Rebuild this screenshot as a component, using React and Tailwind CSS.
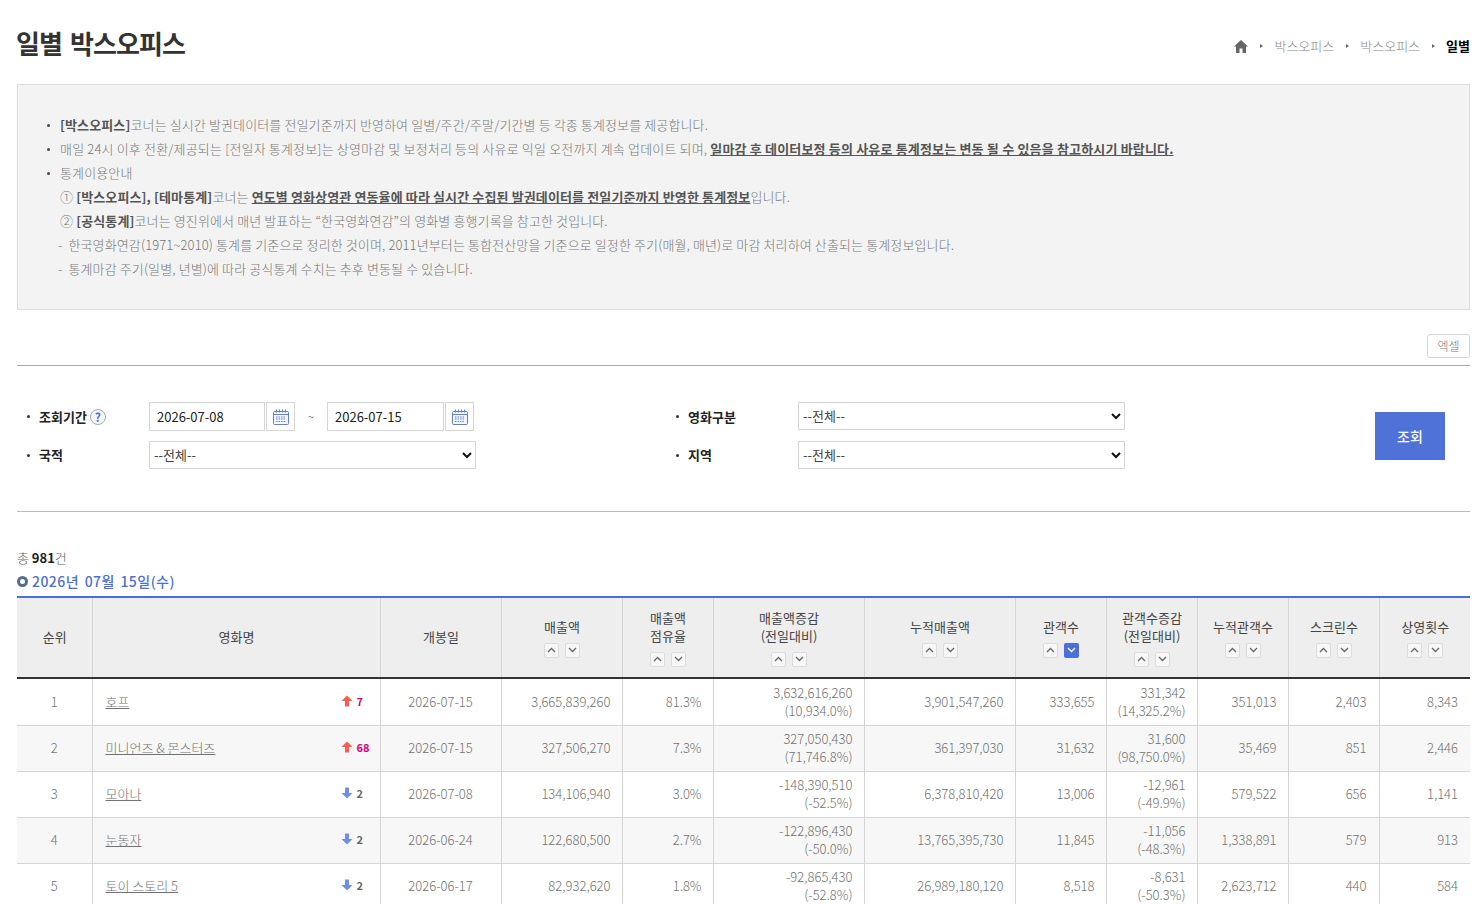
const font = { fontFamily: '"Noto Sans CJK KR", "Noto Sans", sans-serif' };

function Cal() {
  return (
    <svg width="18" height="18" viewBox="0 0 18 18" fill="none" stroke="#5b7fdc" strokeWidth="1">
      <rect x="1.5" y="3.5" width="15" height="13" rx="1" fill="#f4f7fe" />
      <path d="M1.5 6.5h15" />
      <path d="M4.5 1.5v3M7.5 1.5v3M10.5 1.5v3M13.5 1.5v3" />
      <path d="M4 9h1.500M6.500 9h1.500M9 9h1.500M11.500 9h1.500M4 11h1.500M6.500 11h1.500M9 11h1.500M11.500 11h1.500M4 13.500h1.500M6.500 13.500h1.500M9 13.500h1.500M11.500 13.500h1.500" strokeWidth="1.200" />
    </svg>
  );
}

function Sort({ active }) {
  const cls = "w-[15px] h-[15px] flex items-center justify-center rounded-[2px] border border-[#dcdcdc] bg-[#f7f7f7]";
  return (
    <div className="flex justify-center gap-[6px] mt-[7px]">
      <span className={cls}>
        <svg width="9" height="6" viewBox="0 0 9 6" fill="none" stroke="#666" strokeWidth="1.300"><path d="M1 5l3.500-3.500L8 5" /></svg>
      </span>
      <span className={active ? "w-[15px] h-[15px] flex items-center justify-center rounded-[2px] bg-[#4a6fd8]" : cls}>
        <svg width="9" height="6" viewBox="0 0 9 6" fill="none" stroke={active ? "#fff" : "#666"} strokeWidth="1.300"><path d="M1 1l3.500 3.500L8 1" /></svg>
      </span>
    </div>
  );
}

function Arrow({ up }) {
  return (
    <svg width="12" height="12" viewBox="0 0 12 12" fill={up ? "#ff5a4f" : "#6f8fe6"} className="inline-block">
      {up ? <path d="M6 .5L11.500 6H8v5.500H4V6H.5z" /> : <path d="M6 11.500L.5 6H4V.5h4V6h3.500z" />}
    </svg>
  );
}

const cols = [75, 288, 121, 121, 91, 151, 151, 91, 91, 91, 91, 91];

const heads = [
  ["순위"],
  ["영화명"],
  ["개봉일"],
  ["매출액", 1],
  ["매출액", "점유율", 1],
  ["매출액증감", "(전일대비)", 1],
  ["누적매출액", 1],
  ["관객수", 2],
  ["관객수증감", "(전일대비)", 1],
  ["누적관객수", 1],
  ["스크린수", 1],
  ["상영횟수", 1],
];

const rows = [
  ["1", "호프", "up", "7", "2026-07-15", "3,665,839,260", "81.3%", "3,632,616,260", "(10,934.0%)", "3,901,547,260", "333,655", "331,342", "(14,325.2%)", "351,013", "2,403", "8,343"],
  ["2", "미니언즈 & 몬스터즈", "up", "68", "2026-07-15", "327,506,270", "7.3%", "327,050,430", "(71,746.8%)", "361,397,030", "31,632", "31,600", "(98,750.0%)", "35,469", "851", "2,446"],
  ["3", "모아나", "down", "2", "2026-07-08", "134,106,940", "3.0%", "-148,390,510", "(-52.5%)", "6,378,810,420", "13,006", "-12,961", "(-49.9%)", "579,522", "656", "1,141"],
  ["4", "눈동자", "down", "2", "2026-06-24", "122,680,500", "2.7%", "-122,896,430", "(-50.0%)", "13,765,395,730", "11,845", "-11,056", "(-48.3%)", "1,338,891", "579", "913"],
  ["5", "토이 스토리 5", "down", "2", "2026-06-17", "82,932,620", "1.8%", "-92,865,430", "(-52.8%)", "26,989,180,120", "8,518", "-8,631", "(-50.3%)", "2,623,712", "440", "584"],
];

const Num = ({ children, last, wide }) => (
  <td className={`text-right ${wide ? "pr-[12px]" : "pr-[11px]"} ${last ? "" : "border-r border-[#d5d5d5]"}`}>{children}</td>
);

const Two = ({ a, b }) => (
  <td className="text-right pr-[11px] border-r border-[#d5d5d5] leading-[18px]">
    <div>{a}</div>
    <div>{b}</div>
  </td>
);

function Select({ w }) {
  return (
    <div className={`${w} h-[28px] border border-[#d5d5d5] bg-white flex items-center justify-between pl-[4px] pr-[3px] text-[13px] font-normal text-[#444]`}>
      <span>--전체--</span>
      <svg width="10" height="7" viewBox="0 0 10 7" fill="none" stroke="#111" strokeWidth="2"><path d="M1 1l4 4 4-4" /></svg>
    </div>
  );
}

const Label = ({ children }) => (
  <span className="flex items-center font-bold text-[13px] text-[#222]">
    <span className="w-[3px] h-[3px] rounded-full bg-[#333] ml-[10px] mr-[9px]" />
    {children}
  </span>
);

function DateBox({ v, w }) {
  return (
    <div className="flex gap-[1px]">
      <div className={`${w} h-[29px] border border-[#d5d5d5] flex items-center pl-[7px] text-[13px] font-normal text-[#222]`}>{v}</div>
      <div className="w-[29px] h-[29px] border border-[#d5d5d5] flex items-center justify-center"><Cal /></div>
    </div>
  );
}

const Li = ({ children }) => (
  <li className="flex items-center h-[24px]">
    <span className="w-[3px] h-[3px] rounded-full bg-[#444] ml-[1px] mr-[10px]" />
    <span>{children}</span>
  </li>
);

const Sep = () => <span className="ml-[12px] mr-[11px] w-0 h-0 border-y-[2.500px] border-y-transparent border-l-[3px] border-l-[#666]" />;

export default function App() {
  return (
    <div style={font} className="h-[904px] w-[1478px] overflow-hidden bg-white pl-[17px] pr-[8px] text-[#777] font-light">
      <div className="flex items-center justify-between h-[84px]">
        <h1 className="text-[26px] font-bold text-[#333] tracking-[-0.9px] [word-spacing:3px] leading-none -ml-[1px] mt-[2px]">일별 박스오피스</h1>
        <div className="flex items-center text-[13px] mt-[8px]">
          <svg width="14" height="13" viewBox="0 0 14 13" fill="#666"><path d="M7 0L0 6.500h2V13h3.500V8.500h3V13H12V6.500h2z" /></svg>
          <Sep />
          <span className="text-[#888]">박스오피스</span>
          <Sep />
          <span className="text-[#888]">박스오피스</span>
          <Sep />
          <b className="text-black font-bold">일별</b>
        </div>
      </div>

      <div className="h-[226px] border border-[#ddd] bg-[#f3f3f3] pt-[28px] pl-[28px] text-[13px] text-[#777] tracking-[0.12px]">
        <ul>
          <Li><b className="text-[#555] font-bold">[박스오피스]</b>코너는 실시간 발권데이터를 전일기준까지 반영하여 일별/주간/주말/기간별 등 각종 통계정보를 제공합니다.</Li>
          <Li><span className="tracking-[0.17px]">매일 24시 이후 전환/제공되는 [전일자 통계정보]는 상영마감 및 보정처리 등의 사유로 익일 오전까지 계속 업데이트 되며, <b className="text-[#555] font-bold underline">일마감 후 데이터보정 등의 사유로 통계정보는 변동 될 수 있음을 참고하시기 바랍니다.</b></span></Li>
          <Li>통계이용안내</Li>
        </ul>
        <div className="pl-[14px] leading-[24px]">
          <div>① <b className="text-[#555] font-bold">[박스오피스], [테마통계]</b>코너는 <b className="text-[#555] font-bold underline">연도별 영화상영관 연동율에 따라 실시간 수집된 발권데이터를 전일기준까지 반영한 통계정보</b>입니다.</div>
          <div>② <b className="text-[#555] font-bold">[공식통계]</b>코너는 영진위에서 매년 발표하는 “한국영화연감”의 영화별 흥행기록을 참고한 것입니다.</div>
          <div className="-ml-[2px]">-&nbsp; 한국영화연감(1971~2010) 통계를 기준으로 정리한 것이며, 2011년부터는 통합전산망을 기준으로 일정한 주기(매월, 매년)로 마감 처리하여 산출되는 통계정보입니다.</div>
          <div className="-ml-[2px]">-&nbsp; 통계마감 주기(일별, 년별)에 따라 공식통계 수치는 추후 변동될 수 있습니다.</div>
        </div>
      </div>

      <div className="flex justify-end pt-[24px] pb-[7px] border-b border-[#aaa]">
        <span className="w-[43px] h-[24px] border border-[#d5d5d5] rounded-[3px] flex items-center justify-center text-[12px] text-[#777]">엑셀</span>
      </div>

      <div className="h-[146px] border-b border-[#bbb] flex">
        <div className="grid grid-cols-[132px_1fr] grid-rows-[29px_28px] gap-y-[10px] items-start content-start pt-[36px] w-[649px]">
          <div className="h-[29px] flex items-center">
            <Label>조회기간
              <span className="ml-[3px] mt-[1px] w-[16px] h-[16px] rounded-full border border-[#aaa] bg-[#f5f7fd] text-[#4a6fd8] text-[12px] font-bold flex items-center justify-center">?</span>
            </Label>
          </div>
          <div className="flex items-center">
            <DateBox v="2026-07-08" w="w-[116px]" />
            <span className="w-[32px] text-center text-[11px] text-[#555]">~</span>
            <DateBox v="2026-07-15" w="w-[117px]" />
          </div>
          <div className="h-[28px] flex items-center"><Label>국적</Label></div>
          <Select w="w-[327px]" />
        </div>
        <div className="grid grid-cols-[132px_1fr] grid-rows-[29px_28px] gap-y-[10px] items-start content-start pt-[36px] w-[709px]">
          <div className="h-[29px] flex items-center"><Label>영화구분</Label></div>
          <Select w="w-[327px]" />
          <div className="h-[28px] flex items-center"><Label>지역</Label></div>
          <Select w="w-[327px]" />
        </div>
        <div className="pt-[46px]">
          <button className="w-[70px] h-[48px] bg-[#4f72d9] text-white text-[14px] font-medium">조회</button>
        </div>
      </div>

      <div className="pt-[37px] text-[13px] leading-[18px] text-[#666]">총 <b className="text-[#222] font-bold">981</b>건</div>
      <div className="flex items-center mt-[4px] h-[20px] text-[14px] text-[#4a6fd8] font-medium tracking-[0.45px] [word-spacing:2px]">
        <span className="w-[11px] h-[11px] rounded-full border-[3px] border-[#5a6a96] mr-[4px]" />
        2026년 07월 15일(수)
      </div>

      <table className="mt-[5px] w-[1453px] table-fixed border-collapse border-t-2 border-[#4a6fd8] text-[13px] text-[#727272]">
        <colgroup>
          {cols.map((c, i) => <col key={i} style={{ width: c }} />)}
        </colgroup>
        <thead>
          <tr className="h-[81px] bg-[#eee] text-[#444] border-b-[2px] border-b-[#333]">
            {heads.map((h, i) => {
              const labels = h.filter((x) => typeof x === "string");
              const sort = h.find((x) => typeof x === "number");
              return (
                <th key={i} className={`font-normal text-center leading-[18px] ${sort ? "" : "pb-[2px]"} ${i < 11 ? "border-r border-[#d5d5d5]" : ""}`}>
                  {labels.map((l) => <div key={l} className="pl-[1px]">{l}</div>)}
                  {sort ? <Sort active={sort === 2} /> : null}
                </th>
              );
            })}
          </tr>
        </thead>
        <tbody>
          {rows.map((r, i) => (
            <tr key={i} className={`${i === 0 ? "h-[47px]" : "h-[46px]"} border-b border-[#d5d5d5] ${i % 2 ? "bg-[#f7f7f7]" : "bg-white"}`}>
              <td className="text-center border-r border-[#d5d5d5]">{r[0]}</td>
              <td className="border-r border-[#d5d5d5] pl-[13px] pr-[9px]">
                <div className="flex items-center justify-between">
                  <a className="underline">{r[1]}</a>
                  <span className="flex items-center gap-[4px] text-[11px] font-bold -mt-[2px]">
                    <Arrow up={r[2] === "up"} />
                    <span className={`min-w-[14px] ${r[2] === "up" ? "text-[#e0007a]" : "text-[#666]"}`}>{r[3]}</span>
                  </span>
                </div>
              </td>
              <td className="text-center border-r border-[#d5d5d5]">{r[4]}</td>
              <Num>{r[5]}</Num>
              <Num>{r[6]}</Num>
              <Two a={r[7]} b={r[8]} />
              <Num>{r[9]}</Num>
              <Num>{r[10]}</Num>
              <Two a={r[11]} b={r[12]} />
              <Num>{r[13]}</Num>
              <Num wide>{r[14]}</Num>
              <Num wide last>{r[15]}</Num>
            </tr>
          ))}
        </tbody>
      </table>
    </div>
  );
}
